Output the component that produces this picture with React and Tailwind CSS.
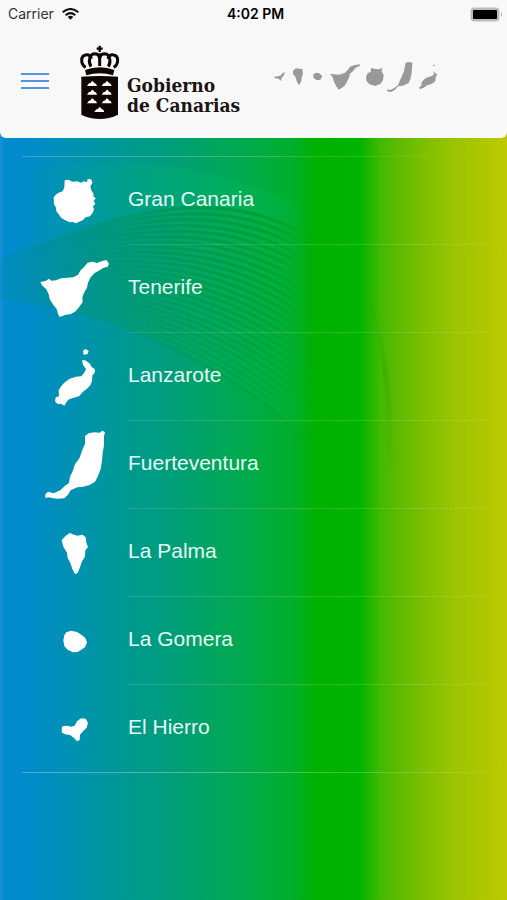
const islands = [
  {
    name: "Gran Canaria",
    viewBox: "90 66 264 264",
    path: "M194 136L204 134L218 140L232 139L243 143L252 139L262 142L261 135L268 131L275 135L277 145L271 154L274 166L281 177L280 184L287 190L281 198L286 207L279 214L282 224L277 235L270 244L257 247L248 256L237 260L228 265L218 261L209 262L196 256L184 249L176 238L169 229L168 218L162 208L161 187L166 181L174 174L188 169L193 157Z",
  },
  {
    name: "Tenerife",
    viewBox: "90 330 264 264",
    path: "M121 441L137 438L147 431L154 437L168 436L183 430L202 428L220 427L234 419L242 406L252 396L263 383L278 380L291 384L305 379L319 375L327 386L323 395L311 398L299 406L284 414L272 427L264 443L261 458L252 473L247 488L248 501L238 515L227 529L213 537L197 539L179 546L174 537L170 522L160 510L149 492L146 478L139 463L126 451Z",
  },
  {
    name: "Lanzarote",
    viewBox: "90 9 264 264",
    path: "M249 62L257 57L266 63L262 73L251 74ZM246 91L256 91L270 101L275 111L284 117L285 126L277 137L276 154L271 166L260 177L249 185L237 199L221 203L207 208L200 215L193 227L183 221L173 222L165 214L167 202L177 199L176 181L184 168L192 159L209 146L228 140L244 139L254 126L258 117L249 105Z",
  },
  {
    name: "Fuerteventura",
    viewBox: "90 273 264 264",
    path: "M255 318L266 310L283 307L300 308L306 302L315 306L312 319L312 346L308 369L306 393L302 417L293 440L285 455L269 465L249 470L232 472L212 481L204 494L193 505L173 506L159 505L147 502L136 504L136 493L144 485L161 490L181 481L195 467L207 459L210 440L218 424L225 403L239 383L246 362L255 341Z",
  },
  {
    name: "La Palma",
    viewBox: "90 537 264 264",
    path: "M185 631L196 618L210 609L218 613L232 617L248 614L257 622L259 638L264 651L256 661L255 680L246 694L240 712L233 729L225 732L217 717L211 699L203 684L201 668L190 650Z",
  },
  {
    name: "La Gomera",
    viewBox: "90 51 264 264",
    path: "M199 157L213 152L231 156L244 164L256 174L261 187L255 202L244 209L233 216L219 217L204 210L193 199L190 181L193 166Z",
  },
  {
    name: "El Hierro",
    viewBox: "90 315 264 264",
    path: "M187 439L201 437L213 440L224 437L231 424L243 415L257 416L264 428L260 443L249 454L240 464L239 480L231 484L222 474L210 465L196 463L186 458L185 448Z",
  },
];

const LINES = 26;
const waves = Array.from({ length: LINES }, (_, i) => {
  const t = i / (LINES - 1);
  const mix = (a, b) => (a + (b - a) * t).toFixed(1);
  return `M0 ${mix(258, 300)}C80 ${mix(232, 306)} 200 ${mix(172, 340)} 308 ${mix(236, 440)}`;
});

function Backdrop() {
  return (
    <svg
      className="pointer-events-none absolute left-0 top-0 h-[900px] w-full"
      viewBox="0 0 507 900"
      preserveAspectRatio="none"
      aria-hidden="true"
    >
      <defs>
        <linearGradient id="shade" gradientUnits="userSpaceOnUse" x1="0" x2="308" y1="0" y2="0">
          <stop offset="0" stopColor="#008a70" stopOpacity="0" />
          <stop offset="0.3" stopColor="#008a60" stopOpacity="0.25" />
          <stop offset="0.7" stopColor="#009030" stopOpacity="0.55" />
          <stop offset="0.9" stopColor="#009a18" stopOpacity="0.6" />
          <stop offset="1" stopColor="#00a800" stopOpacity="0" />
        </linearGradient>
        <linearGradient id="body" gradientUnits="userSpaceOnUse" x1="0" x2="308" y1="0" y2="0">
          <stop offset="0" stopColor="#008c88" stopOpacity="0.18" />
          <stop offset="0.4" stopColor="#009466" stopOpacity="0.32" />
          <stop offset="0.8" stopColor="#00a048" stopOpacity="0.18" />
          <stop offset="1" stopColor="#00a820" stopOpacity="0" />
        </linearGradient>
        <linearGradient id="fall" gradientUnits="userSpaceOnUse" x1="0" x2="0" y1="200" y2="430">
          <stop offset="0" stopColor="#fff" />
          <stop offset="0.4" stopColor="#fff" stopOpacity="0.8" />
          <stop offset="1" stopColor="#fff" stopOpacity="0.3" />
        </linearGradient>
        <mask id="fade" maskUnits="userSpaceOnUse" x="0" y="140" width="320" height="320">
          <rect x="0" y="140" width="320" height="320" fill="url(#fall)" />
        </mask>
        <linearGradient id="glow" x1="0" x2="1" y1="0" y2="0">
          <stop offset="0" stopColor="#00b080" stopOpacity="0" />
          <stop offset="0.7" stopColor="#00b868" stopOpacity="0.35" />
          <stop offset="0.92" stopColor="#00b850" stopOpacity="0.35" />
          <stop offset="1" stopColor="#00b030" stopOpacity="0" />
        </linearGradient>
        <linearGradient id="arc" gradientUnits="userSpaceOnUse" x1="0" x2="0" y1="284" y2="480">
          <stop offset="0" stopColor="#2f9a00" stopOpacity="0.1" />
          <stop offset="0.5" stopColor="#2f9a00" stopOpacity="0.3" />
          <stop offset="1" stopColor="#2f9a00" stopOpacity="0" />
        </linearGradient>
      </defs>
      <path d="M0 176C90 154 200 152 310 212V440C200 340 80 306 0 300Z" fill="url(#glow)" />
      <g mask="url(#fade)">
        <path d="M0 258C80 232 200 172 308 236V440C200 340 80 306 0 300Z" fill="url(#body)" />
        {waves.map((d) => (
          <path key={d} d={d} fill="none" stroke="url(#shade)" strokeWidth="3" />
        ))}
      </g>
      <path d="M364 284C384 325 396 390 392 480H386C390 400 380 330 364 284Z" fill="url(#arc)" />
    </svg>
  );
}

function Crest() {
  return (
    <svg className="h-[78px] w-[42px] shrink-0" viewBox="30 14 126 234" aria-hidden="true">
      <g fill="none" stroke="#100505" strokeWidth="9">
        <path d="M92 19V38M83 28H101" strokeWidth="7" />
        <path d="M50 84C35 76 33 50 50 47C60 45 66 51 67 58" />
        <path d="M134 84C149 76 151 50 134 47C124 45 118 51 117 58" />
        <path d="M66 82C57 68 61 44 76 43C86 43 91 49 92 57C93 49 98 43 108 43C123 44 127 68 118 82" />
        <path d="M92 42V80" />
      </g>
      <path d="M48 92Q92 76 136 92L132 108Q92 95 52 108Z" fill="#100505" />
      <path d="M37 112Q92 108 147 112V226Q120 239 92 239Q64 239 37 226Z" fill="#100505" />
      <g fill="#fff">
        {["54 140", "98 140", "54 166", "98 166", "54 192", "98 192", "76 218"].map((p) => (
          <path key={p} d={`M${p}l6 -8l5 -1l4 -6l4 2l4 5l4 1l3 7Z`} />
        ))}
      </g>
    </svg>
  );
}

function Archipelago() {
  return (
    <svg className="ml-[30px] mt-1.5 h-[50px] w-[180px] shrink-0" viewBox="0 0 540 150" role="img" aria-label="Islas Canarias">
      <path
        fill="#999"
        d="M12 81L22 79L31 77L38 69L45 67L41 77L35 84L33 93L26 86L14 84ZM69 62L78 55L97 57L99 71L95 83L94 94L87 106L81 96L76 80L69 73ZM130 73L139 68L148 70L157 79L151 89L140 91L130 83ZM180 72L192 73L207 74L225 68L235 58L240 50L252 46L270 43L269 48L257 53L250 62L240 71L237 83L230 97L223 109L206 119L199 109L192 96L188 82ZM303 54L315 57L328 58L337 53L335 65L341 74L339 90L332 101L316 108L298 103L289 92L288 80L293 69L302 66ZM407 38L417 36L427 38L426 52L425 69L421 88L416 99L399 107L385 108L375 119L364 126L351 124L351 119L363 119L374 113L384 105L389 93L396 78L402 63ZM489 44H494V48H489ZM491 64L495 69L502 73L497 82L496 94L485 102L471 106L461 113L449 118L448 111L454 107L455 96L467 84L483 79L491 75Z"
      />
    </svg>
  );
}

function StatusBar() {
  return (
    <div className="grid h-7 grid-cols-3 items-center pl-2 pr-1 font-['Inter','Liberation_Sans',sans-serif] text-sm leading-7 text-[#333]">
      <div className="flex items-center gap-2">
        <span>Carrier</span>
        <svg className="h-3 w-[17px]" viewBox="0 0 51 36" fill="none" stroke="#111" strokeWidth="6" aria-label="Wi-Fi">
          <path d="M2 13Q25.500 -7 49 13M11 22Q25.500 9 40 22" />
          <path d="M17 27Q25.500 20 34 27L25.500 35Z" fill="#111" stroke="none" />
        </svg>
      </div>
      <span className="text-center font-semibold text-black">4:02 PM</span>
      <svg className="h-[15px] w-[33px] justify-self-end" viewBox="0 0 33 15" aria-label="Battery">
        <rect x="0.500" y="0.500" width="29" height="14" rx="4" fill="#bbb" />
        <rect x="3" y="3" width="24" height="9" rx="1" fill="#000" />
        <path d="M31 5Q33 7 31 10Z" fill="#aaa" />
      </svg>
    </div>
  );
}

export default function App() {
  return (
    <div className="relative min-h-screen bg-[linear-gradient(90deg,#1a90d8_0%,#008cd0_1%,#008bcb_5%,#0094a8_18%,#009a8c_27%,#009e76_35%,#00a65c_43%,#00ac40_52%,#00af28_58%,#00b000_62%,#00b400_71%,#42b900_75%,#60bb00_79%,#80bf00_84%,#9cc400_90%,#bfc900_100%)] font-['Liberation_Sans',Arial,sans-serif]">
      <Backdrop />
      <header className="relative h-[138px] rounded-b-md bg-[#f8f8f8]">
        <StatusBar />
        <div className="flex items-start pl-[21px] pt-4">
          <button type="button" aria-label="Menu" className="mt-7 flex h-[18px] w-7 flex-col justify-between py-px">
            <span className="h-[2px] w-full bg-[#5594e8]" />
            <span className="h-[2px] w-full bg-[#5594e8]" />
            <span className="h-[2px] w-full bg-[#5594e8]" />
          </button>
          <div className="ml-[30px] flex items-start">
            <Crest />
            <p className="ml-[6px] mt-[31px] whitespace-nowrap font-['DejaVu_Serif_Condensed','DejaVu_Serif',serif] text-[19px] font-bold leading-5 text-[#1c1414]">
              Gobierno
              <br />
              de Canarias
            </p>
          </div>
          <Archipelago />
        </div>
      </header>
      <main className="relative pt-[18px]">
        <div className="ml-[22px] mr-5 h-px bg-linear-to-r from-white/20 via-white/20 to-white/0" />
        <ul>
          {islands.map((island) => (
            <li key={island.name} className="group">
              <a href="#" className="flex h-[87px] items-center pl-[30px] text-[21px] text-[#e6fbf5]">
                <svg className="h-[88px] w-[88px] shrink-0" viewBox={island.viewBox} aria-hidden="true">
                  <path d={island.path} fill="#fff" />
                </svg>
                <span className="ml-[10px] pb-1">{island.name}</span>
              </a>
              <div className="ml-32 mr-5 h-px bg-linear-to-r from-white/10 via-white/15 to-white/10 group-last:ml-[22px] group-last:from-white/30 group-last:via-white/30" />
            </li>
          ))}
        </ul>
      </main>
    </div>
  );
}
